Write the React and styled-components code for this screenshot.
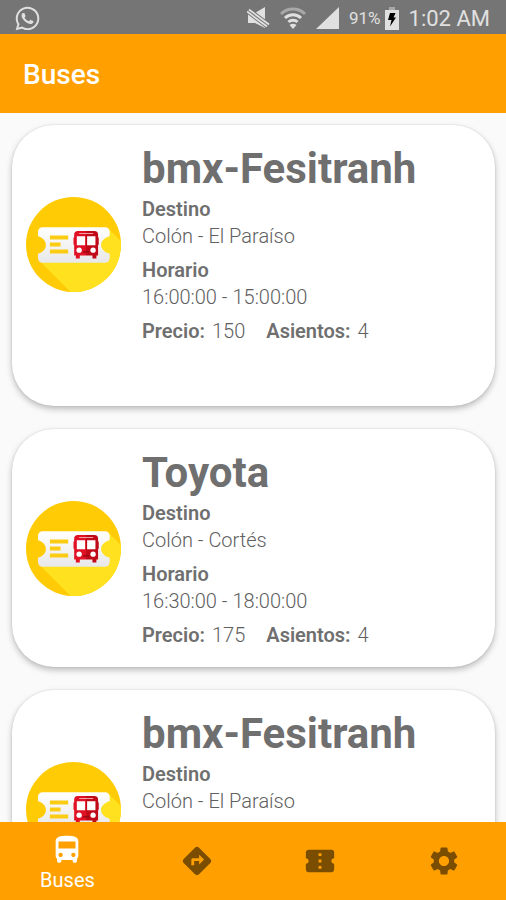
import React, { useState } from 'react'
import styled, { createGlobalStyle } from 'styled-components'
import { MdDirectionsBus, MdDirections, MdConfirmationNumber, MdSettings } from 'react-icons/md'
import { FaWhatsapp } from 'react-icons/fa'

const color = {
    primary: '#ffa000',
    status: '#757575',
    statusIcon: '#e0e0e0',
    text: '#6f6f6f',
    value: '#606060',
    background: '#fafafa',
    inactive: '#7a4d00'
}

const GlobalStyle = createGlobalStyle`
    * {
        box-sizing: border-box;
    }
    body {
        margin: 0;
        font-family: Roboto, "Liberation Sans", sans-serif;
        color: ${color.text};
        background: ${color.background};
    }
`
const Page = styled.div`
    display: flex;
    flex-direction: column;
    height: 100vh;
    overflow: hidden;
`
const StatusBar = styled.div`
    flex: none;
    display: flex;
    align-items: center;
    height: 34px;
    padding: 2px 16px 0 14px;
    background: ${color.status};
    color: ${color.statusIcon};
    svg {
        display: block;
    }
`
const StatusIcons = styled.div`
    display: flex;
    align-items: center;
    gap: 10px;
    margin-left: auto;
`
const Battery = styled.div`
    display: flex;
    align-items: center;
    gap: 4px;
    font-size: 17px;
`
const Clock = styled.time`
    font-size: 22px;
`
const AppBar = styled.header`
    flex: none;
    display: flex;
    align-items: center;
    height: 79px;
    padding: 0 23px;
    background: ${color.primary};
`
const AppTitle = styled.h1`
    margin: 0;
    padding-top: 2px;
    font-size: 28px;
    font-weight: 500;
    color: #fff;
`
const BusList = styled.main`
    flex: 1;
    min-height: 0;
    display: flex;
    flex-direction: column;
    gap: 23px;
    padding: 12px 11px 12px 12px;
    overflow: hidden;
`
const Card = styled.article`
    flex: none;
    padding-bottom: ${(props) => (props.$spaced ? '43px' : '0')};
    border-radius: 42px;
    background: #fff;
    box-shadow: 0 3px 6px rgba(0, 0, 0, 0.25), 0 0 2px rgba(0, 0, 0, 0.12);
`
const CardBody = styled.div`
    display: flex;
    align-items: center;
    gap: 21px;
    padding: 18px 14px;
`
const Logo = styled.svg`
    flex: none;
    width: 95px;
    height: 95px;
`
const BusName = styled.h2`
    margin: 0 0 1px;
    font-size: 42px;
    line-height: 52px;
    font-weight: 700;
`
const Details = styled.dl`
    display: flex;
    flex-direction: column;
    gap: 7px;
    margin: 0;
    font-size: 20px;
    line-height: 27px;
`
const Label = styled.dt`
    font-weight: 600;
`
const Value = styled.dd`
    margin: 0;
    font-weight: 300;
    color: ${color.value};
`
const Pairs = styled.div`
    display: flex;
    gap: 21px;
`
const Pair = styled.div`
    display: flex;
    gap: 7px;
`
const NavBar = styled.nav`
    flex: none;
    display: flex;
    height: 78px;
    background: ${color.primary};
    z-index: 1;
`
const NavButton = styled.button`
    flex: ${(props) => (props.$active ? '12 1 0' : '11 1 0')};
    display: flex;
    flex-direction: column;
    align-items: center;
    justify-content: center;
    padding: ${(props) => (props.$active ? '4px 0 0' : '0')};
    border: none;
    background: none;
    font-family: inherit;
    font-size: 20px;
    line-height: 26px;
    color: ${(props) => (props.$active ? '#fff' : color.inactive)};
    cursor: pointer;
    svg {
        display: block;
        width: 34px;
        height: 34px;
    }
`

const buses = [
    { id: 1, name: 'bmx-Fesitranh', destino: 'Colón - El Paraíso', horario: '16:00:00 - 15:00:00', precio: 150, asientos: 4, spaced: true },
    { id: 2, name: 'Toyota', destino: 'Colón - Cortés', horario: '16:30:00 - 18:00:00', precio: 175, asientos: 4 },
    { id: 3, name: 'bmx-Fesitranh', destino: 'Colón - El Paraíso', horario: '16:00:00 - 15:00:00', precio: 150, asientos: 4 }
]

const tabs = [
    { name: 'Buses', Icon: MdDirectionsBus },
    { name: 'Rutas', Icon: MdDirections },
    { name: 'Boletos', Icon: MdConfirmationNumber },
    { name: 'Ajustes', Icon: MdSettings }
]

const MuteIcon = () => (
    <svg width="23" height="22" viewBox="0 0 23 22" fill={color.statusIcon}>
        <path d="M1 6 H8 L18 0 V21 L8 16 H1 Z" />
        <path d="M-1 2 L23 20" stroke={color.status} strokeWidth="6.500" />
        <path d="M0 4.500 L20 19.500 M2 2.500 L22 17.500" stroke={color.statusIcon} strokeWidth="1.800" />
    </svg>
)

const WifiIcon = () => (
    <svg width="26" height="22" viewBox="0 0 26 22" fill="none" stroke={color.statusIcon} strokeWidth="3">
        <path d="M1 7 A17 17 0 0 1 25 7" stroke="#a8a8a8" />
        <path d="M5 11 A11.500 11.500 0 0 1 21 11" />
        <path d="M8.500 15 A6.500 6.500 0 0 1 17.500 15" />
        <path d="M13 22 L9.500 18 Q13 15.500 16.500 18 Z" fill={color.statusIcon} stroke="none" />
    </svg>
)

const SignalIcon = () => (
    <svg width="23" height="22" viewBox="0 0 23 22" fill={color.statusIcon}>
        <path d="M23 0 V22 H0 Z" />
    </svg>
)

const BatteryIcon = () => (
    <svg width="14" height="23" viewBox="0 0 14 23">
        <path d="M4 0 H10 V3 H4 Z" fill="#a8a8a8" />
        <path d="M0 3 H14 V23 H0 Z" fill={color.statusIcon} />
        <path d="M5 6 H10.500 L8.500 10.500 H11 L5 19.500 L6.500 13 H3 Z" fill="#000" />
    </svg>
)

const TicketLogo = () => (
    <Logo viewBox="0 0 286 286" aria-hidden="true">
        <defs>
            <clipPath id="disc">
                <circle cx="143" cy="143" r="143" />
            </clipPath>
            <linearGradient id="paper" x1="0" y1="0" x2="0" y2="1">
                <stop offset="0" stopColor="#ffffff" />
                <stop offset="1" stopColor="#e8e8ea" />
            </linearGradient>
            <linearGradient id="red" x1="0" y1="0" x2="1" y2="0">
                <stop offset="0.500" stopColor="#e01125" />
                <stop offset="0.500" stopColor="#c00a18" />
            </linearGradient>
        </defs>
        <g clipPath="url(#disc)">
            <rect width="286" height="286" fill="#ffcb05" />
            <path d="M40 192 L248 95 L300 147 V300 H148 Z" fill="#ffe11f" />
        </g>
        <path
            d="M50 91 H238 A14 14 0 0 1 252 105 V118 C242 120 226 129 226 144 C226 160 242 169 252 171 V184 A14 14 0 0 1 238 198 H50 A14 14 0 0 1 36 184 V171 C46 169 60 160 60 144 C60 129 46 120 36 118 V105 A14 14 0 0 1 50 91 Z"
            fill="url(#paper)"
        />
        <path d="M72 122 H127 M72 143 H104 M72 164 H127" stroke="#fccb14" strokeWidth="12" />
        <path
            d="M156 102 H206 Q217 102 217 113 V122 H219 V144 H217 V176 H212 V185 H200 V176 H162 V185 H150 V176 H145 V144 H143 V122 H145 V113 Q145 102 156 102 Z"
            fill="url(#red)"
        />
        <path d="M153 118 H178 V145 H153 Z M184 118 H209 V145 H184 Z" fill="#fff" />
        <path d="M160 110 H202" stroke="#f3a6ab" strokeWidth="3" />
        <path d="M172 165 H190" stroke="#920812" strokeWidth="4" />
        <circle cx="160" cy="160" r="8" fill="#fff" />
        <circle cx="202" cy="160" r="8" fill="#fff" />
    </Logo>
)

const BusCard = ({ bus }) => (
    <Card $spaced={bus.spaced}>
        <CardBody>
            <TicketLogo />
            <div>
                <BusName>{bus.name}</BusName>
                <Details>
                    <div>
                        <Label>Destino</Label>
                        <Value>{bus.destino}</Value>
                    </div>
                    <div>
                        <Label>Horario</Label>
                        <Value>{bus.horario}</Value>
                    </div>
                    <Pairs>
                        <Pair>
                            <Label>Precio:</Label>
                            <Value>{bus.precio}</Value>
                        </Pair>
                        <Pair>
                            <Label>Asientos:</Label>
                            <Value>{bus.asientos}</Value>
                        </Pair>
                    </Pairs>
                </Details>
            </div>
        </CardBody>
    </Card>
)

const App = () => {
    const [activeTab, setActiveTab] = useState('Buses')

    return (
        <Page>
            <GlobalStyle />
            <StatusBar>
                <FaWhatsapp size={27} />
                <StatusIcons>
                    <MuteIcon />
                    <WifiIcon />
                    <SignalIcon />
                    <Battery>
                        <span>91%</span>
                        <BatteryIcon />
                    </Battery>
                    <Clock>1:02 AM</Clock>
                </StatusIcons>
            </StatusBar>
            <AppBar>
                <AppTitle>Buses</AppTitle>
            </AppBar>
            <BusList>
                {buses.map((bus) => (
                    <BusCard key={bus.id} bus={bus} />
                ))}
            </BusList>
            <NavBar>
                {tabs.map(({ name, Icon }) => (
                    <NavButton
                        key={name}
                        type="button"
                        aria-label={name}
                        $active={activeTab === name}
                        onClick={() => setActiveTab(name)}
                    >
                        <Icon />
                        {activeTab === name && <span>{name}</span>}
                    </NavButton>
                ))}
            </NavBar>
        </Page>
    )
}

export default App
